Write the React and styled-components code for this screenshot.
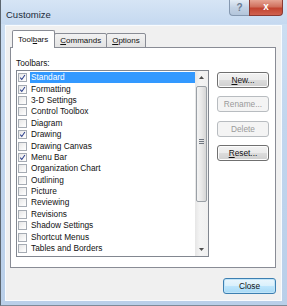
import React from "react";
import styled, { createGlobalStyle } from "styled-components";

const toolbars = [
  { name: "Standard", checked: true, selected: true },
  { name: "Formatting", checked: true },
  { name: "3-D Settings" },
  { name: "Control Toolbox" },
  { name: "Diagram" },
  { name: "Drawing", checked: true },
  { name: "Drawing Canvas" },
  { name: "Menu Bar", checked: true },
  { name: "Organization Chart" },
  { name: "Outlining" },
  { name: "Picture" },
  { name: "Reviewing" },
  { name: "Revisions" },
  { name: "Shadow Settings" },
  { name: "Shortcut Menus" },
  { name: "Tables and Borders" },
];

const Check = () => (
  <svg width="9" height="9" viewBox="0 0 9 9">
    <path d="M1.5 4.6 L3.6 7 L7.6 1.2" fill="none" stroke="#2b3f8c" strokeWidth="1.3" />
  </svg>
);

const Arrow = ({ down }) => (
  <svg width="5" height="3" viewBox="0 0 5 3">
    <path d={down ? "M0 0 L5 0 L2.5 3 Z" : "M0 3 L5 3 L2.5 0 Z"} fill="#4d4d4d" />
  </svg>
);

const App = () => {
  return (
    <>
      <GlobalStyle />
      <Window>
        <TitleBar>
          <Title>Customize</Title>
          <CaptionButtons>
            <HelpButton>?</HelpButton>
            <CloseCaption>x</CloseCaption>
          </CaptionButtons>
        </TitleBar>
        <Client>
          <Tabs>
            <Tab $active>
              Tool<u>b</u>ars
            </Tab>
            <Tab>
              <u>C</u>ommands
            </Tab>
            <Tab>
              <u>O</u>ptions
            </Tab>
          </Tabs>
          <Panel>
            <ListColumn>
              <Label>Toolbars:</Label>
              <ListBox>
                <Items>
                  {toolbars.map((t) => (
                    <Row key={t.name}>
                      <CheckBox>{t.checked && <Check />}</CheckBox>
                      <RowText $selected={t.selected}>{t.name}</RowText>
                    </Row>
                  ))}
                </Items>
                <ScrollBar>
                  <ArrowButton>
                    <Arrow />
                  </ArrowButton>
                  <Track>
                    <Thumb>
                      <Grip />
                    </Thumb>
                  </Track>
                  <ArrowButton>
                    <Arrow down />
                  </ArrowButton>
                </ScrollBar>
              </ListBox>
            </ListColumn>
            <ButtonColumn>
              <Button>
                <u>N</u>ew...
              </Button>
              <Button disabled>Rename...</Button>
              <Button disabled>Delete</Button>
              <Button>
                <u>R</u>eset...
              </Button>
            </ButtonColumn>
          </Panel>
          <Footer>
            <Button $default $wide>
              Close
            </Button>
          </Footer>
        </Client>
      </Window>
    </>
  );
};

export default App;

const GlobalStyle = createGlobalStyle`
  body {
    margin: 0;
    background: #ffffff;
    font-family: "Liberation Sans", Arial, sans-serif;
  }
`;

const Window = styled.div`
  width: 287px;
  height: 306px;
  box-sizing: border-box;
  display: flex;
  flex-direction: column;
  border-left: 1px solid #5c6670;
  border-bottom: 1px solid #7d8a98;
  background: linear-gradient(180deg, #cfe0f3 0%, #c2d6ee 40%, #b9cfe9 100%);
`;

const TitleBar = styled.div`
  height: 24px;
  display: flex;
  justify-content: space-between;
  align-items: flex-start;
  padding-left: 5px;
  background: linear-gradient(180deg, #d6e5f5 0%, #c5d9f0 100%);
`;

const Title = styled.div`
  margin-top: 9px;
  font-size: 9.5px;
  color: #1c2a3a;
`;

const CaptionButtons = styled.div`
  display: flex;
  margin-right: 4px;
`;

const HelpButton = styled.div`
  width: 20px;
  height: 16px;
  box-sizing: border-box;
  border: 1px solid #8598b0;
  border-top: none;
  border-right: none;
  border-radius: 0 0 0 4px;
  background: linear-gradient(180deg, #e4ecf5 0%, #c3d2e4 50%, #b3c5db 100%);
  color: #6a7b92;
  font-size: 10px;
  font-weight: bold;
  text-align: center;
  line-height: 15px;
`;

const CloseCaption = styled.div`
  width: 34px;
  height: 16px;
  box-sizing: border-box;
  border: 1px solid #8b3a33;
  border-top: none;
  border-radius: 0 0 4px 0;
  background: linear-gradient(180deg, #e6a493 0%, #d0705d 45%, #c2432f 55%, #d06250 100%);
  color: #ffffff;
  font-size: 10px;
  font-weight: bold;
  text-align: center;
  line-height: 14px;
`;

const Client = styled.div`
  flex: 1;
  margin: 1px 5px 4px 4px;
  box-sizing: border-box;
  border: 1px solid #f8fbfe;
  background: #f0f0f0;
  padding: 5px 5px 0 4px;
  display: flex;
  flex-direction: column;
`;

const Tabs = styled.div`
  display: flex;
  align-items: flex-end;
  height: 17px;
  padding-left: 2px;
  position: relative;
  z-index: 1;
  margin-bottom: -1px;
`;

const Tab = styled.div`
  box-sizing: border-box;
  height: ${({ $active }) => ($active ? "18px" : "15px")};
  padding: ${({ $active }) => ($active ? "4px 6px 0 5px" : "2px 5px 0 5px")};
  margin-left: ${({ $active }) => ($active ? "0" : "-1px")};
  border: 1px solid #898c95;
  border-bottom: ${({ $active }) => ($active ? "none" : "1px solid #898c95")};
  border-radius: 2px 2px 0 0;
  background: ${({ $active }) =>
    $active ? "#ffffff" : "linear-gradient(180deg, #f2f2f2 0%, #e3e3e3 100%)"};
  font-size: 8px;
  color: #111111;
  white-space: nowrap;
  &:first-child {
    margin-left: 0;
  }
`;

const Panel = styled.div`
  height: 221px;
  box-sizing: border-box;
  border: 1px solid #898c95;
  background: #ffffff;
  display: flex;
  padding: 0 5px 0 5px;
  gap: 8px;
`;

const ListColumn = styled.div`
  display: flex;
  flex-direction: column;
  width: 193px;
`;

const Label = styled.div`
  padding-top: 9px;
  height: 12px;
  line-height: 12px;
  font-size: 8.3px;
  color: #111111;
`;

const ListBox = styled.div`
  margin-top: 1px;
  height: 187px;
  box-sizing: border-box;
  border: 1px solid #828790;
  display: flex;
  background: #ffffff;
`;

const Items = styled.div`
  flex: 1;
  padding-top: 1px;
  display: flex;
  flex-direction: column;
`;

const Row = styled.div`
  height: 11.4px;
  display: flex;
  align-items: center;
  padding-left: 1px;
`;

const CheckBox = styled.div`
  width: 9px;
  height: 9px;
  box-sizing: border-box;
  border: 1px solid #a5abb3;
  background: linear-gradient(135deg, #e6e6e6 0%, #f6f6f6 60%, #ffffff 100%);
  display: flex;
  align-items: center;
  justify-content: center;
  margin-right: 3px;
`;

const RowText = styled.div`
  flex: 1;
  height: 11px;
  line-height: 11px;
  padding-left: 1px;
  font-size: 8.3px;
  color: ${({ $selected }) => ($selected ? "#ffffff" : "#111111")};
  background: ${({ $selected }) => ($selected ? "#3399ff" : "transparent")};
  white-space: nowrap;
`;

const ScrollBar = styled.div`
  width: 13px;
  display: flex;
  flex-direction: column;
  background: linear-gradient(90deg, #e6e6e6 0%, #f4f4f4 40%, #f0f0f0 100%);
`;

const ArrowButton = styled.div`
  height: 13px;
  display: flex;
  align-items: center;
  justify-content: center;
`;

const Track = styled.div`
  flex: 1;
  padding: 2px 1px 0 1px;
`;

const Thumb = styled.div`
  height: 116px;
  box-sizing: border-box;
  border: 1px solid #9aa0a6;
  border-radius: 2px;
  background: linear-gradient(90deg, #f4f4f4 0%, #e8e8e8 50%, #d6d6d6 100%);
  display: flex;
  align-items: center;
  justify-content: center;
`;

const Grip = styled.div`
  width: 5px;
  height: 5px;
  margin-top: -6px;
  background: repeating-linear-gradient(180deg, #6f7680 0 1px, transparent 1px 2px);
`;

const ButtonColumn = styled.div`
  display: flex;
  flex-direction: column;
  gap: 8.3px;
  padding-top: 24px;
`;

const Button = styled.button`
  width: ${({ $wide }) => ($wide ? "53px" : "52px")};
  height: 16px;
  box-sizing: border-box;
  padding: 0;
  border-radius: 3px;
  font-family: "Liberation Sans", Arial, sans-serif;
  font-size: 8.3px;
  color: #111111;
  border: 1px solid ${({ $default }) => ($default ? "#3c7fb1" : "#707070")};
  background: ${({ $default }) =>
    $default
      ? "linear-gradient(180deg, #eaf6fd 0%, #d9f0fc 50%, #bee6fd 50%, #a7d9f5 100%)"
      : "linear-gradient(180deg, #f2f2f2 0%, #ebebeb 50%, #dddddd 50%, #cfcfcf 100%)"};
  box-shadow: inset 0 0 0 1px ${({ $default }) => ($default ? "#c0e4f8" : "#fcfcfc")};

  &:disabled {
    color: #9a9a9a;
    border-color: #b8bcc0;
    background: #f4f4f4;
    box-shadow: none;
  }
`;

const Footer = styled.div`
  display: flex;
  justify-content: flex-end;
  padding-top: 10px;
  padding-right: 0;
`;
